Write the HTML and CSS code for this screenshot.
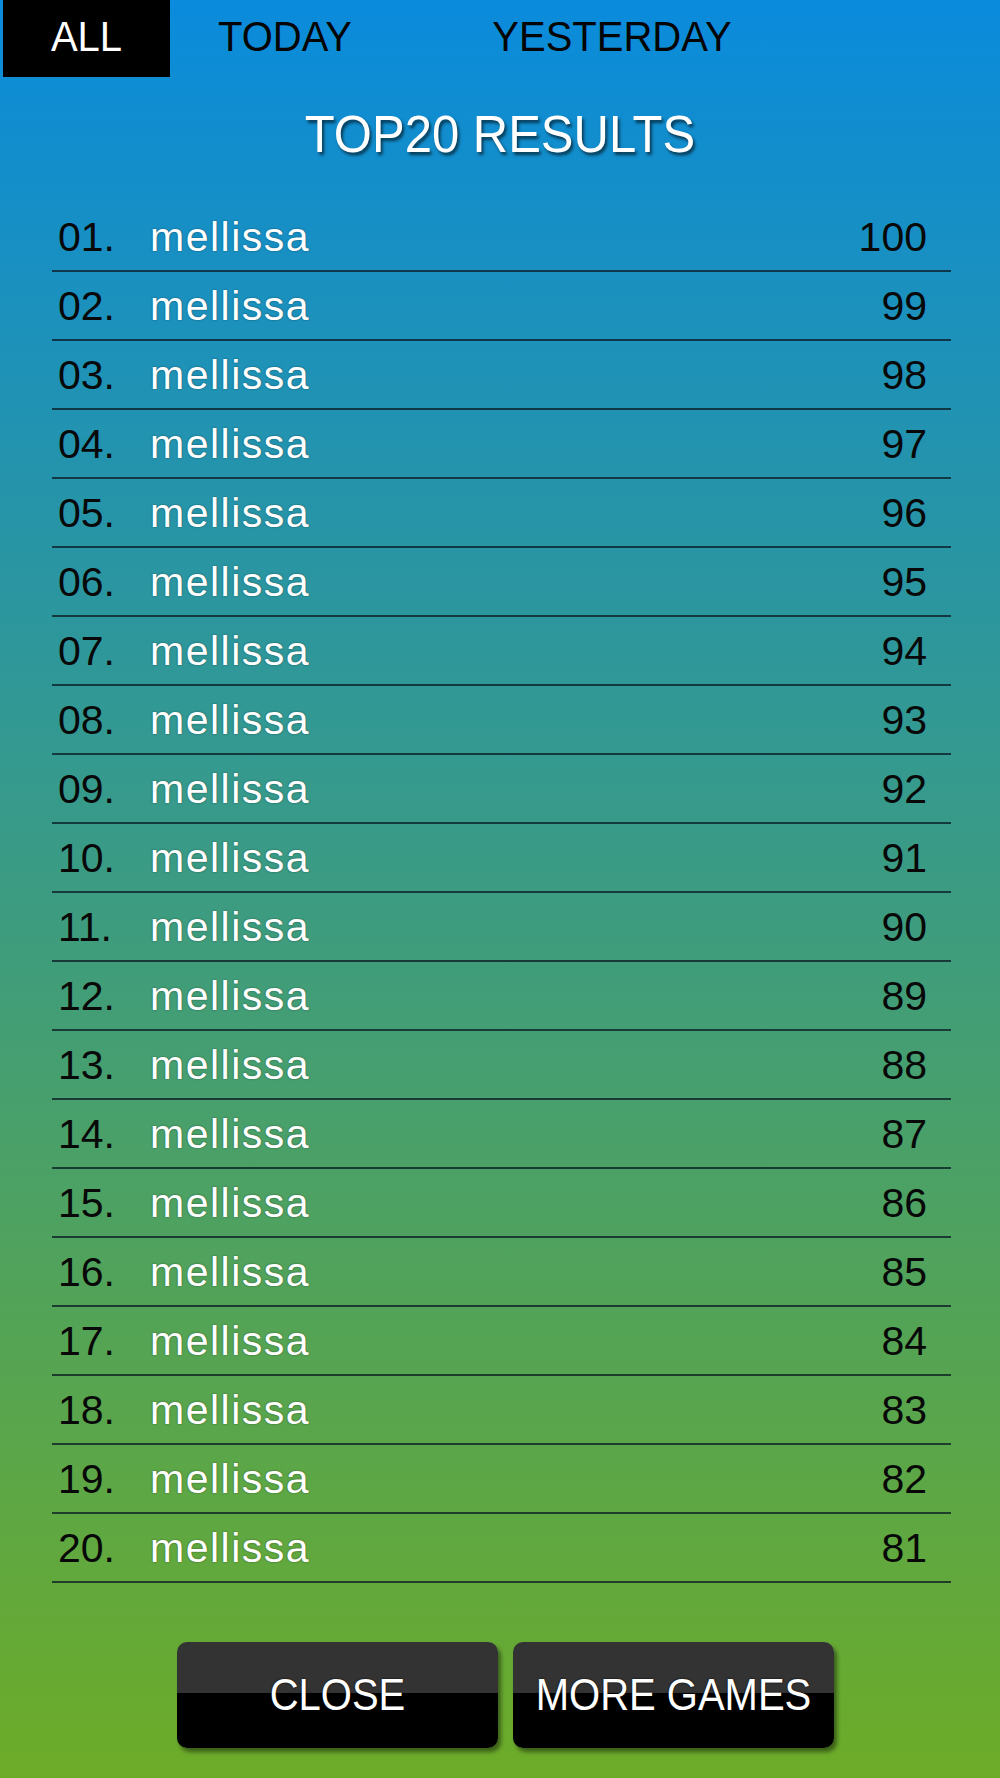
FILE: index.html
```html
<!DOCTYPE html>
<html lang="en">
<head>
    <meta charset="UTF-8">
    <meta name="viewport" content="width=device-width, initial-scale=1.0">
    <title>Top20 Results</title>
    <link rel="stylesheet" href="styles.css">
</head>
<body>
    <div class="screen">
        <div class="tabs">
            <div class="tab tab-all active"><span>ALL</span></div>
            <div class="tab tab-today"><span>TODAY</span></div>
            <div class="tab tab-yesterday"><span>YESTERDAY</span></div>
        </div>

        <h1 class="title"><span>TOP20 RESULTS</span></h1>

        <ul class="results">
            <li class="row"><span class="pos">01.</span><span class="name">mellissa</span><span class="score">100</span></li>
            <li class="row"><span class="pos">02.</span><span class="name">mellissa</span><span class="score">99</span></li>
            <li class="row"><span class="pos">03.</span><span class="name">mellissa</span><span class="score">98</span></li>
            <li class="row"><span class="pos">04.</span><span class="name">mellissa</span><span class="score">97</span></li>
            <li class="row"><span class="pos">05.</span><span class="name">mellissa</span><span class="score">96</span></li>
            <li class="row"><span class="pos">06.</span><span class="name">mellissa</span><span class="score">95</span></li>
            <li class="row"><span class="pos">07.</span><span class="name">mellissa</span><span class="score">94</span></li>
            <li class="row"><span class="pos">08.</span><span class="name">mellissa</span><span class="score">93</span></li>
            <li class="row"><span class="pos">09.</span><span class="name">mellissa</span><span class="score">92</span></li>
            <li class="row"><span class="pos">10.</span><span class="name">mellissa</span><span class="score">91</span></li>
            <li class="row"><span class="pos">11.</span><span class="name">mellissa</span><span class="score">90</span></li>
            <li class="row"><span class="pos">12.</span><span class="name">mellissa</span><span class="score">89</span></li>
            <li class="row"><span class="pos">13.</span><span class="name">mellissa</span><span class="score">88</span></li>
            <li class="row"><span class="pos">14.</span><span class="name">mellissa</span><span class="score">87</span></li>
            <li class="row"><span class="pos">15.</span><span class="name">mellissa</span><span class="score">86</span></li>
            <li class="row"><span class="pos">16.</span><span class="name">mellissa</span><span class="score">85</span></li>
            <li class="row"><span class="pos">17.</span><span class="name">mellissa</span><span class="score">84</span></li>
            <li class="row"><span class="pos">18.</span><span class="name">mellissa</span><span class="score">83</span></li>
            <li class="row"><span class="pos">19.</span><span class="name">mellissa</span><span class="score">82</span></li>
            <li class="row"><span class="pos">20.</span><span class="name">mellissa</span><span class="score">81</span></li>
        </ul>

        <div class="buttons">
            <button class="btn"><span>CLOSE</span></button>
            <button class="btn"><span>MORE GAMES</span></button>
        </div>
    </div>
</body>
</html>
```

FILE: styles.css
```css
body {
    margin: 0;
    font-family: "Liberation Sans", Arial, sans-serif;
}
.screen {
    height: 1778px;
    background: linear-gradient(#0a8bdc, #6dac28);
    overflow: hidden;
}
.tabs {
    display: flex;
    padding-left: 3px;
    height: 77px;
}
.tab {
    display: flex;
    justify-content: center;
    align-items: center;
    padding-bottom: 4px;
    box-sizing: border-box;
    font-size: 40px;
    color: #050505;
}
.tab span {
    display: inline-block;
    transform: scaleY(1.08);
}
.tab-all {
    width: 167px;
}
.tab-today {
    width: 230px;
}
.tab-yesterday {
    width: 424px;
}
.tab.active {
    background-color: #000;
    color: #fff;
    text-shadow: 0 0 2px rgba(0,0,0,0.8);
}
.title {
    margin: 0;
    padding: 29px 0 41px;
    text-align: center;
    font-size: 49px;
    font-weight: normal;
    line-height: 56px;
    color: #fff;
    text-shadow: 2px 3px 3px rgba(0,0,0,0.6);
}
.title span {
    display: inline-block;
    transform: scaleY(1.06);
}
.results {
    list-style: none;
    margin: 0 49px 0 52px;
    padding: 0;
}
.row {
    display: flex;
    align-items: center;
    height: 66px;
    padding: 1px 24px 0 6px;
    border-bottom: 2px solid rgba(10,25,35,0.75);
    font-size: 41px;
}
.pos {
    width: 92px;
    color: #080808;
}
.name {
    flex: 1;
    color: #fff;
    letter-spacing: 1.5px;
    text-shadow: 0 0 2px rgba(0,0,0,0.45);
}
.score {
    color: #080808;
}
.buttons {
    display: flex;
    justify-content: center;
    gap: 15px;
    margin-top: 59px;
    padding-left: 11px;
}
.btn {
    width: 321px;
    height: 106px;
    border: none;
    border-radius: 10px;
    background: linear-gradient(#333 0, #333 48%, #000 48%, #000 100%);
    box-shadow: 3px 4px 4px rgba(0,0,0,0.45);
    color: #fff;
    font-family: "Liberation Sans", Arial, sans-serif;
    font-size: 40px;
    padding: 0;
    text-shadow: 0 0 2px #000;
}
.btn span {
    display: inline-block;
    transform: scaleY(1.1);
}
```
